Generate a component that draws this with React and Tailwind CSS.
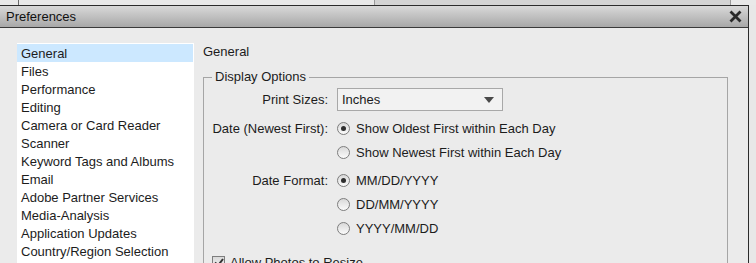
import { useState } from "react";

const categories = [
  "General",
  "Files",
  "Performance",
  "Editing",
  "Camera or Card Reader",
  "Scanner",
  "Keyword Tags and Albums",
  "Email",
  "Adobe Partner Services",
  "Media-Analysis",
  "Application Updates",
  "Country/Region Selection",
];

function Radio({ checked }) {
  return (
    <span className="w-[13px] h-[13px] rounded-full border border-[#7d7d7d] bg-linear-to-b from-[#d9d9d9] to-[#fbfbfb] flex items-center justify-center shrink-0">
      {checked && <span className="w-[5px] h-[5px] rounded-full bg-[#2e2e2e]" />}
    </span>
  );
}

function RadioRow({ checked, label }) {
  return (
    <div className="flex items-center h-[24px] gap-[6px]">
      <Radio checked={checked} />
      <span>{label}</span>
    </div>
  );
}

export default function App() {
  const [selected, setSelected] = useState("General");

  return (
    <div className="w-[756px] h-[263px] overflow-hidden bg-[#e8e8e8] text-[13px] leading-none text-[#1c1c1c] font-['Liberation_Sans',Arial,sans-serif]">
      {/* app behind the dialog */}
      <div className="flex h-[5px]">
        <div className="w-[19px] bg-[#e9e9e9] border-r border-[#6a6a6a]" />
        <div className="w-[356px] bg-[#e9e9e9] border-r border-[#9a9a9a]" />
        <div className="w-[356px] bg-[#d3d3d3] border-r border-[#9a9a9a]" />
        <div className="flex-1 bg-[#e9e9e9]" />
      </div>

      <div className="w-[749px] border-t border-r border-[#2b2b2b] bg-[#ebebeb]">
        {/* title bar */}
        <div className="h-[22px] flex items-center justify-between pl-[6px] pr-[6px] bg-linear-to-b from-[#d9d9d9] to-[#a8a8a8] border-b border-[#3a3a3a]">
          <span className="text-[13px] text-[#111]">Preferences</span>
          <svg width="13" height="13" viewBox="0 0 13 13">
            <path d="M1.5 1.5 L11.5 11.5 M11.5 1.5 L1.5 11.5" stroke="#2a2a2a" strokeWidth="2.8" />
          </svg>
        </div>

        <div className="flex pt-[15px] pl-[17px] h-[240px]">
          {/* category list */}
          <div className="w-[177px] bg-white pt-[1px]">
            {categories.map((c) => (
              <div
                key={c}
                onClick={() => setSelected(c)}
                className={
                  "h-[18px] flex items-center pl-[4px] mr-[1px] " +
                  (selected === c ? "bg-[#cce8ff]" : "")
                }
              >
                {c}
              </div>
            ))}
          </div>

          {/* settings pane */}
          <div className="flex-1 pl-[9px] pr-[20px]">
            <div className="h-[16px] flex items-center">{selected}</div>

            <div className="mt-[18px] border-l border-r border-t border-[#a5a5a5] relative">
              <span className="absolute -top-[8px] left-[8px] px-[3px] bg-[#ebebeb]">Display Options</span>

              <div className="pt-[10px] flex flex-col">
                <div className="flex items-center h-[23px]">
                  <div className="w-[133px] text-right pr-[9px]">Print Sizes:</div>
                  <div className="w-[166px] h-[23px] border border-[#a8a8a8] bg-[#f2f2f2] flex items-center justify-between pl-[4px] pr-[8px]">
                    <span>Inches</span>
                    <svg width="10" height="6" viewBox="0 0 10 6">
                      <path d="M0 0 H10 L5 6 Z" fill="#4a4a4a" />
                    </svg>
                  </div>
                </div>

                <div className="flex mt-[5px]">
                  <div className="w-[133px] text-right pr-[9px] h-[24px] flex items-center justify-end">Date (Newest First):</div>
                  <div className="flex flex-col">
                    <RadioRow checked label="Show Oldest First within Each Day" />
                    <RadioRow label="Show Newest First within Each Day" />
                  </div>
                </div>

                <div className="flex mt-[4px]">
                  <div className="w-[133px] text-right pr-[9px] h-[24px] flex items-center justify-end">Date Format:</div>
                  <div className="flex flex-col">
                    <RadioRow checked label="MM/DD/YYYY" />
                    <RadioRow label="DD/MM/YYYY" />
                    <RadioRow label="YYYY/MM/DD" />
                  </div>
                </div>

                <div className="flex items-center gap-[5px] pl-[8px] mt-[16px]">
                  <span className="w-[13px] h-[13px] border border-[#7d7d7d] bg-linear-to-b from-[#d9d9d9] to-[#f5f5f5] flex items-center justify-center">
                    <svg width="10" height="9" viewBox="0 0 10 9">
                      <path d="M1 4.5 L4 7.5 L9 1" stroke="#333" strokeWidth="2" fill="none" />
                    </svg>
                  </span>
                  <span>Allow Photos to Resize</span>
                </div>
              </div>
            </div>
          </div>
        </div>
      </div>
    </div>
  );
}
